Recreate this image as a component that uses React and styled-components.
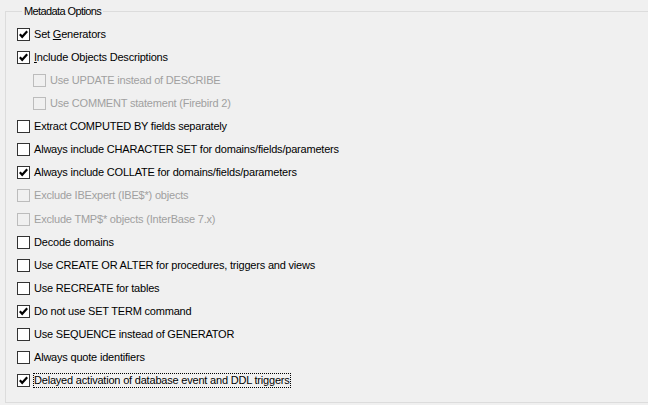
import React from 'react';
import styled, { createGlobalStyle } from 'styled-components';

const GlobalStyle = createGlobalStyle`
  html, body {
    margin: 0;
    padding: 0;
    background: #f0f0f0;
    overflow: hidden;
  }
  body {
    font-family: "Liberation Sans", sans-serif;
  }
`;

const Page = styled.div`
  width: 648px;
  height: 405px;
  padding: 5px 0 0 5px;
  box-sizing: border-box;
  overflow: hidden;
`;

const GroupBox = styled.fieldset`
  margin: 0;
  width: 680px;
  height: 398px;
  box-sizing: border-box;
  border: 1px solid #dcdcdc;
  padding: 6px 0 0 11px;
`;

const Legend = styled.legend`
  padding: 0 2px;
  margin-left: 5px;
  font-family: "Liberation Sans", sans-serif;
  font-size: 11px;
  letter-spacing: -0.6px;
  color: #000;
`;

const List = styled.div`
  display: flex;
  flex-direction: column;
`;

const Row = styled.label`
  display: flex;
  align-items: center;
  height: 23.07px;
  padding-left: ${p => (p.$indent ? '16px' : '0')};
  font-family: "Liberation Sans", sans-serif;
  font-size: 11px;
  letter-spacing: -0.2px;
  color: ${p => (p.$disabled ? '#a0a0a0' : '#000')};
  white-space: nowrap;
`;

const Box = styled.span`
  width: 13px;
  height: 13px;
  box-sizing: border-box;
  border: 1px solid ${p => (p.$disabled ? '#bcbcbc' : '#333')};
  background: ${p => (p.$disabled ? '#f0f0f0' : '#fff')};
  display: flex;
  align-items: center;
  justify-content: center;
  margin-right: 3px;
  flex: none;
`;

const Text = styled.span`
  padding: 0 1px;
  outline: ${p => (p.$focus ? '1px dotted #000' : 'none')};
  outline-offset: -1px;
  line-height: 15px;
`;

const Check = () => (
  <svg width="9" height="9" viewBox="0 0 9 9">
    <path d="M0.8 4.2 L3.2 6.8 L8.2 1.2" fill="none" stroke="#000" strokeWidth="2.2" />
  </svg>
);

const options = [
  { label: 'Set Generators', checked: true, mn: 'G' },
  { label: 'Include Objects Descriptions', checked: true, mn: 'I' },
  { label: 'Use UPDATE instead of DESCRIBE', indent: true, disabled: true },
  { label: 'Use COMMENT statement (Firebird 2)', indent: true, disabled: true },
  { label: 'Extract COMPUTED BY fields separately' },
  { label: 'Always include CHARACTER SET for domains/fields/parameters' },
  { label: 'Always include COLLATE for domains/fields/parameters', checked: true },
  { label: 'Exclude IBExpert (IBE$*) objects', disabled: true },
  { label: 'Exclude TMP$* objects (InterBase 7.x)', disabled: true },
  { label: 'Decode domains' },
  { label: 'Use CREATE OR ALTER for procedures, triggers and views' },
  { label: 'Use RECREATE for tables' },
  { label: 'Do not use SET TERM command', checked: true },
  { label: 'Use SEQUENCE instead of GENERATOR' },
  { label: 'Always quote identifiers' },
  { label: 'Delayed activation of database event and DDL triggers', checked: true, focus: true },
];

function renderLabel(label, mn) {
  if (!mn) return label;
  const i = label.indexOf(mn);
  return (
    <>
      {label.slice(0, i)}
      <u>{label[i]}</u>
      {label.slice(i + 1)}
    </>
  );
}

export default function App() {
  return (
    <>
      <GlobalStyle />
      <Page>
        <GroupBox>
          <Legend>Metadata Options</Legend>
          <List>
            {options.map(o => (
              <Row key={o.label} $indent={o.indent} $disabled={o.disabled}>
                <Box $disabled={o.disabled}>{o.checked && <Check />}</Box>
                <Text $focus={o.focus}>{renderLabel(o.label, o.mn)}</Text>
              </Row>
            ))}
          </List>
        </GroupBox>
      </Page>
    </>
  );
}
